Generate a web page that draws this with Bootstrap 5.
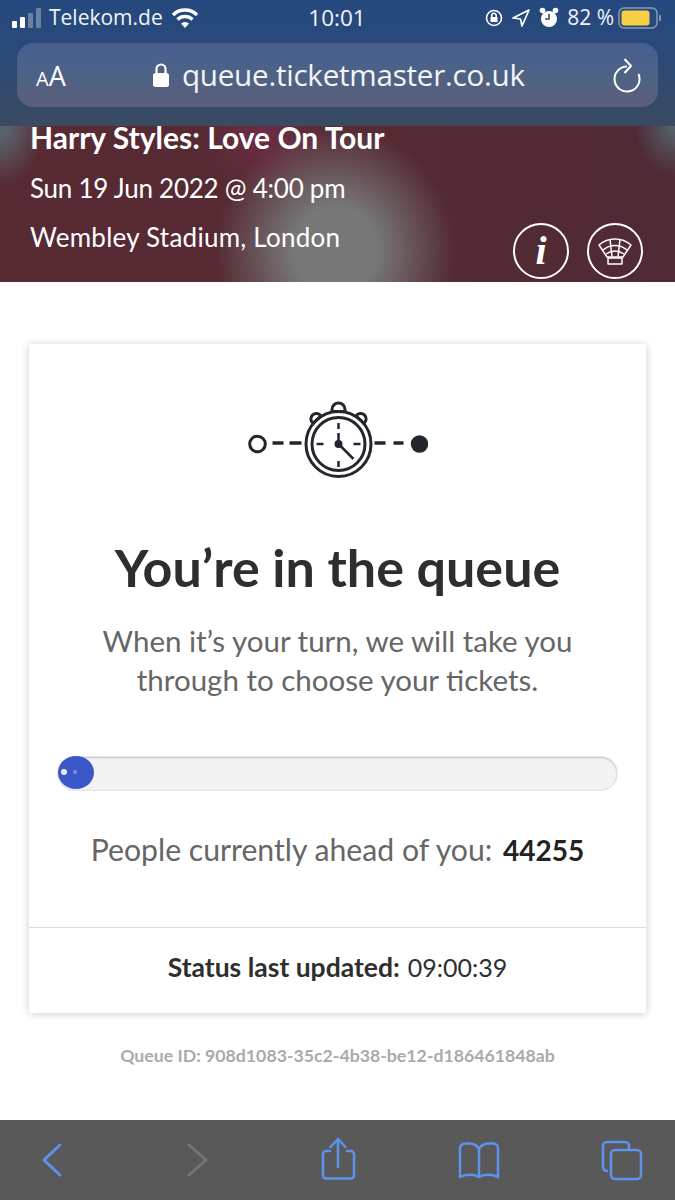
<!DOCTYPE html>
<html lang="en">
<head>
<meta charset="UTF-8">
<title>Queue</title>
<link href="https://cdn.jsdelivr.net/npm/bootstrap@5.3.0/dist/css/bootstrap.min.css" rel="stylesheet">
<style>
body { margin: 0; width: 675px; height: 1200px; overflow: hidden; background: #fff; font-family: Lato, "Open Sans", sans-serif; }
.phone-top { height: 126px; background: linear-gradient(180deg, #25487f 0%, #2b4a78 45%, #3a4a60 100%); color: #fff; }
.status-row { height: 43px; font-family: "Open Sans", sans-serif; font-size: 21px; padding: 0 13px 7px 12px; color: #f1f4f8; }
.status-side { width: 270px; }
.signal-wrap { height: 20px; gap: 3px; }
.signal-bar { width: 5px; border-radius: 1px; background: #fff; }
.signal-off { background: #6b82a4; }
.signal-1 { height: 7px; }
.signal-2 { height: 11px; }
.signal-3 { height: 15px; }
.signal-4 { height: 20px; }
.status-time { font-size: 22.5px; font-weight: 500; }
.url-bar { height: 64px; margin: 0 17px; border-radius: 16px; background: linear-gradient(180deg, #46608f 0%, #4f6284 55%, #5c5e78 100%); padding: 0 16px 0 19px; }
.text-size { font-family: "Open Sans", sans-serif; font-size: 27px; width: 116px; line-height: 1; }
.text-size span { font-size: 20px; }
.url-text { font-family: "Open Sans", sans-serif; font-size: 29.6px; letter-spacing: -.25px; color: #f3f4f7; margin-left: 12px; }
.hero-band { height: 156px; padding: 0 30px; color: #fff; position: relative; background:
  radial-gradient(ellipse 120px 125px at 335px 125px, #777 35%, rgba(119,119,119,0) 100%),
  radial-gradient(ellipse 65px 55px at 265px 10px, rgba(112,44,72,.9) 0%, rgba(106,44,68,0) 100%),
  radial-gradient(ellipse 45px 60px at 0 0, #59616a 20%, rgba(89,97,106,0) 100%),
  radial-gradient(ellipse 40px 50px at 675px 0, #566068 10%, rgba(86,96,104,0) 100%),
  linear-gradient(90deg, #582a33 0%, #562a33 50%, #4f2a35 100%); }
.hero-title { font-size: 30px; font-weight: 700; line-height: 22px; margin-bottom: 27px; color: #fff; }
.hero-date { font-size: 26px; letter-spacing: -.25px; line-height: 26px; margin-bottom: 23px; }
.hero-venue { font-size: 26px; letter-spacing: .25px; line-height: 26px; }
.round-btn { width: 56px; height: 56px; border: 2px solid #fff; border-radius: 50%; }
.hero-btns { position: absolute; right: 32px; bottom: 3px; gap: 18px; }
.info-i { font-family: "Liberation Serif", serif; font-style: italic; font-weight: 700; font-size: 40px; line-height: 1; }
.page-main { flex: 1 1 auto; padding: 62px 29px 0; }
.queue-card { height: 669px; border: 0; border-radius: 2px; box-shadow: 0 1px 8px rgba(0,0,0,.2); }
.queue-icon { margin-top: 57px; height: 80px; }
.queue-title { font-size: 52px; font-weight: 700; color: #2e2e2e; line-height: 60px; margin: 56px 0 0; }
.queue-sub { font-size: 29.5px; line-height: 39px; color: #666; margin: 24px 0 0; }
.bar-track { height: 33px; margin: 58px 29px 0 29px; border-radius: 17px; background: #f3f3f3; box-shadow: inset 0 1px 2px rgba(0,0,0,.2), 0 0 0 1px #e6e6e6; position: relative; }
.bar-dot { position: absolute; left: 0; top: -1px; width: 36px; height: 33px; border-radius: 50%; background: #3b57c8; }
.bar-dot::before { content: ""; position: absolute; left: 3px; top: 13px; width: 6px; height: 6px; border-radius: 50%; background: #e8edfb; }
.bar-dot::after { content: ""; position: absolute; left: 15px; top: 14px; width: 4px; height: 4px; border-radius: 50%; background: #7d90e0; }
.ahead-text { font-size: 30.2px; color: #666; margin: 39px 0 0; line-height: 40px; }
.ahead-text b { color: #222; font-weight: 700; font-size: 28px; margin-left: 3px; }
.status-foot { border-top: 1px solid #dcdcdc; height: 86px; padding-bottom: 5px; font-size: 25px; color: #2e2e2e; }
.status-foot b { font-size: 26.5px; }
.queue-id { font-size: 17.7px; font-weight: 700; color: #aaa; margin-top: 30px; }
.safari-bar { height: 80px; background: #595959; padding: 0 32px 0 30px; }
</style>
</head>
<body class="d-flex flex-column">

<div class="phone-top">
  <div class="status-row d-flex align-items-center justify-content-between">
    <div class="status-side d-flex align-items-center">
      <div class="signal-wrap d-flex align-items-end me-2">
        <div class="signal-bar signal-1"></div>
        <div class="signal-bar signal-2"></div>
        <div class="signal-bar signal-off signal-3"></div>
        <div class="signal-bar signal-off signal-4"></div>
      </div>
      <span>Telekom.de</span>
      <svg class="ms-2" width="28" height="22" viewBox="0 0 28 22" fill="none" stroke="#fff" stroke-width="3.4">
        <path d="M2 8a17 17 0 0 1 24 0"/><path d="M6.500 12.500a11 11 0 0 1 15 0"/><path d="M14 21l-4-4.500a6 6 0 0 1 8 0z" fill="#fff" stroke="none"/>
      </svg>
    </div>
    <span class="status-time">10:01</span>
    <div class="status-side d-flex align-items-center justify-content-end">
      <svg width="18" height="20" viewBox="0 0 18 20" fill="none" stroke="#fff" stroke-width="1.6"><circle cx="9" cy="10" r="7.500"/><rect x="5.500" y="9" width="7" height="5" fill="#fff" stroke="none"/><path d="M6.800 9V7.500a2.200 2.200 0 0 1 4.400 0V9"/></svg>
      <svg class="ms-2" width="20" height="20" viewBox="0 0 20 20" fill="none" stroke="#fff" stroke-width="1.7" stroke-linejoin="round"><path d="M18 2L2 10l7.500 1L11 18z"/></svg>
      <svg class="ms-2" width="20" height="22" viewBox="0 0 20 22"><circle cx="10" cy="12" r="8" fill="#fff"/><path d="M10 7v5H6" stroke="#3a4a70" stroke-width="1.600" fill="none"/><circle cx="3.500" cy="3.500" r="2.800" fill="#fff"/><circle cx="16.500" cy="3.500" r="2.800" fill="#fff"/></svg>
      <span class="ms-2">82 %</span>
      <svg class="ms-1" width="44" height="24" viewBox="0 0 44 24"><rect x="1" y="2" width="38" height="20" rx="5" fill="none" stroke="#8a9ab5" stroke-width="1.500"/><rect x="3.500" y="4.500" width="28" height="15" rx="3" fill="#f7cf46"/><rect x="41" y="9" width="2" height="6" rx="1" fill="#8a9ab5"/></svg>
    </div>
  </div>
  <div class="url-bar d-flex align-items-center">
    <div class="text-size"><span>A</span>A</div>
    <svg width="18" height="26" viewBox="0 0 18 26" fill="none"><rect x="1" y="11" width="16" height="14" rx="2.500" fill="#fff"/><path d="M4.500 11V7a4.500 4.500 0 0 1 9 0v4" stroke="#fff" stroke-width="2.200"/></svg>
    <span class="url-text flex-grow-1">queue.ticketmaster.co.uk</span>
    <svg width="30" height="38" viewBox="0 0 30 38" fill="none" stroke="#fff" stroke-width="2"><path d="M15 10.500A12.500 12.500 0 1 0 26.500 18"/><path d="M12.500 3l6.500 7-6.500 7" stroke-linejoin="round"/></svg>
  </div>
</div>

<div class="hero-band">
  <div class="hero-title">Harry Styles: Love On Tour</div>
  <div class="hero-date">Sun 19 Jun 2022 @ 4:00 pm</div>
  <div class="hero-venue">Wembley Stadium, London</div>
  <div class="hero-btns d-flex">
    <div class="round-btn d-flex align-items-center justify-content-center"><span class="info-i">i</span></div>
    <div class="round-btn d-flex align-items-center justify-content-center">
      <svg width="36" height="30" viewBox="0 0 36 30" fill="none" stroke="#fff" stroke-width="1.500" stroke-linejoin="round">
        <path d="M2 9C11 1 25 1 34 9l-8 12H10z"/><path d="M6 14C13 8 23 8 30 14"/><path d="M9 18C15 14 21 14 27 18"/>
        <path d="M13 3.500l2 17M23 3.500l-2 17"/>
        <path d="M11 22h14v6H11z"/>
      </svg>
    </div>
  </div>
</div>

<div class="page-main">
  <div class="card queue-card text-center">
    <div class="queue-icon">
      <svg width="180" height="80" viewBox="0 0 180 80" fill="none" stroke="#23272d" stroke-width="3">
        <circle cx="9.500" cy="43" r="7.800"/>
        <path d="M24.500 42h11M41.500 42h12M126.500 42h11M145.500 42h10" stroke-width="3.500"/>
        <circle cx="171.500" cy="43" r="8.700" fill="#23272d" stroke="none"/>
        <circle cx="90.500" cy="43" r="32.500"/>
        <circle cx="90.500" cy="43" r="26.500"/>
        <path d="M84 10.500V8.500a6.500 6.500 0 0 1 13 0v2M84 10.500h13"/>
        <path d="M65 22.300A5.500 5.500 0 1 1 73 15M65 22.300L73 15M116 22.300A5.500 5.500 0 1 0 108 15M116 22.300L108 15"/>
        <path d="M90.500 22v6M90.500 60v6M68.500 43h7M105.500 43h7" stroke-width="2.500"/>
        <path d="M90.500 32v11l15 15" stroke-width="2.500"/>
        <circle cx="90.500" cy="43" r="2.500" fill="#23272d"/>
      </svg>
    </div>
    <h1 class="queue-title">You’re in the queue</h1>
    <p class="queue-sub">When it’s your turn, we will take you<br>through to choose your tickets.</p>
    <div class="bar-track"><div class="bar-dot"></div></div>
    <p class="ahead-text">People currently ahead of you: <b>44255</b></p>
    <div class="status-foot mt-auto d-flex align-items-center justify-content-center gap-2">
      <b>Status last updated:</b><span>09:00:39</span>
    </div>
  </div>
  <div class="queue-id text-center">Queue ID: 908d1083-35c2-4b38-be12-d186461848ab</div>
</div>

<div class="safari-bar d-flex align-items-center justify-content-between">
  <svg width="44" height="46" viewBox="0 0 44 46" fill="none" stroke="#5c93ee" stroke-width="3" stroke-linecap="round" stroke-linejoin="round"><path d="M30 8L14 23l16 15"/></svg>
  <svg width="44" height="46" viewBox="0 0 44 46" fill="none" stroke="#757575" stroke-width="3" stroke-linecap="round" stroke-linejoin="round"><path d="M17 8l17 15-17 15"/></svg>
  <svg width="44" height="46" viewBox="0 0 44 46" fill="none" stroke="#5c93ee" stroke-width="2.500" stroke-linecap="round" stroke-linejoin="round"><path d="M23 30V2M15.500 10L23 2l7.500 8"/><path d="M15 14h-4a3 3 0 0 0-3 3v21.500a3 3 0 0 0 3 3h25a3 3 0 0 0 3-3V17a3 3 0 0 0-3-3h-4"/></svg>
  <svg width="44" height="46" viewBox="0 0 44 46" fill="none" stroke="#5c93ee" stroke-width="2.500" stroke-linejoin="round" stroke-linecap="round"><path d="M22 12C20 8 16 6.500 12 6.500H8a5 5 0 0 0-5 5V40c6-3 14-3 19 0 5-3 13-3 19 0V11.500a5 5 0 0 0-5-5h-4c-4 0-8 1.500-10 5.500zM22 12v28"/></svg>
  <svg width="44" height="46" viewBox="0 0 44 46" fill="none" stroke="#5c93ee" stroke-width="2.500"><path d="M9 34H8a4 4 0 0 1-4-4V9a4 4 0 0 1 4-4h18a4 4 0 0 1 4 4v4"/><rect x="12" y="13" width="30" height="29" rx="4"/></svg>
</div>

<script src="https://cdn.jsdelivr.net/npm/bootstrap@5.3.0/dist/js/bootstrap.bundle.min.js"></script>
</body>
</html>
